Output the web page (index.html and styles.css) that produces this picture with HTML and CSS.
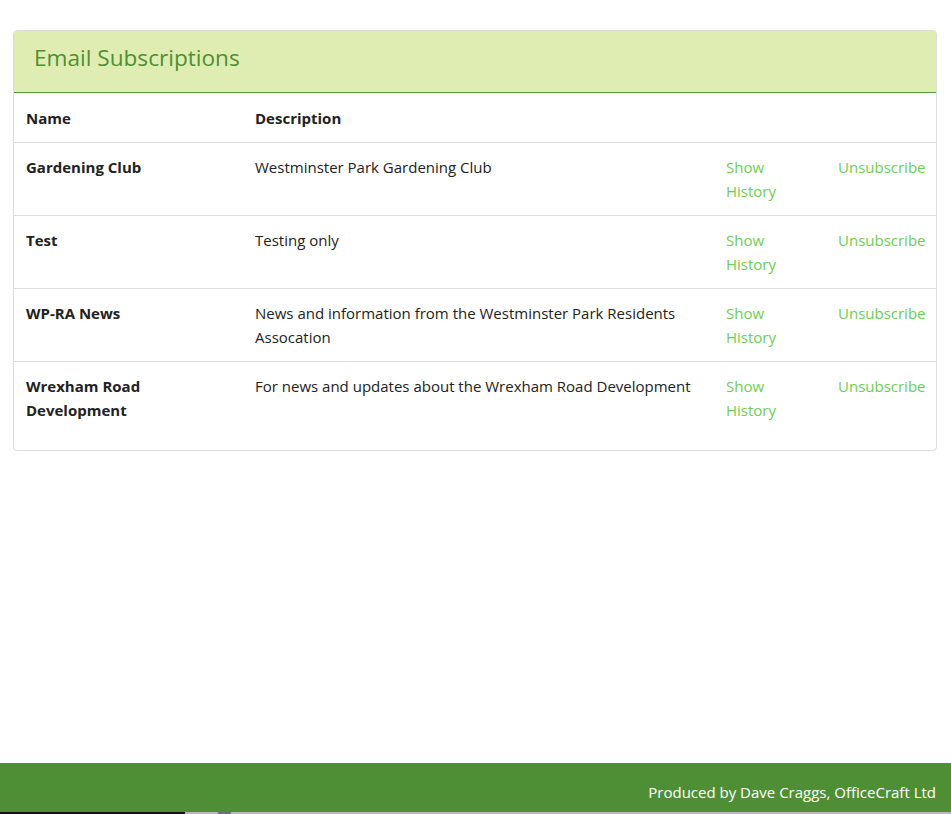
FILE: index.html
```html
<!DOCTYPE html>
<html lang="en">
<head>
<meta charset="utf-8">
<title>Email Subscriptions</title>
<link rel="stylesheet" href="styles.css">
</head>
<body>
<div class="page">
  <main class="content">
    <section class="panel">
      <header class="panel-heading">
        <h1 class="panel-title">Email Subscriptions</h1>
      </header>
      <table class="subs">
        <colgroup>
          <col class="c-name">
          <col class="c-desc">
          <col class="c-hist">
          <col class="c-unsub">
        </colgroup>
        <thead>
          <tr><th>Name</th><th>Description</th><th></th><th></th></tr>
        </thead>
        <tbody>
          <tr>
            <td class="name">Gardening Club</td>
            <td>Westminster Park Gardening Club</td>
            <td><a href="#" class="link">Show History</a></td>
            <td><a href="#" class="link">Unsubscribe</a></td>
          </tr>
          <tr>
            <td class="name">Test</td>
            <td>Testing only</td>
            <td><a href="#" class="link">Show History</a></td>
            <td><a href="#" class="link">Unsubscribe</a></td>
          </tr>
          <tr>
            <td class="name">WP-RA News</td>
            <td>News and information from the Westminster Park Residents Assocation</td>
            <td><a href="#" class="link">Show History</a></td>
            <td><a href="#" class="link">Unsubscribe</a></td>
          </tr>
          <tr>
            <td class="name">Wrexham Road Development</td>
            <td>For news and updates about the Wrexham Road Development</td>
            <td><a href="#" class="link">Show History</a></td>
            <td><a href="#" class="link">Unsubscribe</a></td>
          </tr>
        </tbody>
      </table>
    </section>
  </main>
  <footer class="footer">Produced by Dave Craggs, OfficeCraft Ltd</footer>
  <div class="taskbar"><span class="tb-dark"></span><span class="tb-icon"></span></div>
</div>
</body>
</html>
```

FILE: styles.css
```css
* { box-sizing: border-box; }
html, body { margin: 0; padding: 0; }
body {
  font-family: "Open Sans", "Noto Sans", sans-serif;
  font-size: 15px;
  line-height: 24px;
  color: #222;
  background: #fff;
}
.page {
  min-height: 100vh;
  display: flex;
  flex-direction: column;
}
.content {
  flex: 1;
  padding: 30px 14px 0 13px;
}
.panel {
  border: 1px solid #dcdcdc;
  border-radius: 4px;
  overflow: hidden;
  padding-bottom: 16px;
}
.panel-heading {
  background: #dfedb3;
  border-bottom: 1px solid #4f9a32;
  padding: 12px 20px 0;
  height: 62px;
}
.panel-title {
  margin: 0;
  font-weight: 400;
  font-size: 22.6px;
  color: #4f8f32;
  line-height: 30px;
}
.subs {
  width: 100%;
  border-collapse: collapse;
  table-layout: fixed;
}
.c-name { width: 229px; }
.c-desc { width: 471px; }
.c-hist { width: 112px; }
.c-unsub { width: 110px; }
.subs th, .subs td {
  text-align: left;
  vertical-align: top;
  padding: 12px;
}
.subs th { font-weight: 700; padding-top: 13px; }
.subs thead tr { border-bottom: 1px solid #dedede; }
.subs tbody tr + tr { border-top: 1px solid #dedede; }
.subs td.name { font-weight: 700; }
.link {
  color: #6ccf4f;
  text-decoration: none;
}
.footer {
  height: 49px;
  background: #4e8f35;
  color: #fff;
  text-align: right;
  padding: 17px 15px 0 0;
  line-height: 24px;
}
.taskbar {
  height: 2px;
  background: #b8b8b8;
  display: flex;
}
.tb-dark { width: 185px; background: #111; }
.tb-icon { width: 13px; margin-left: 33px; background: #6b6f7a; }
```
